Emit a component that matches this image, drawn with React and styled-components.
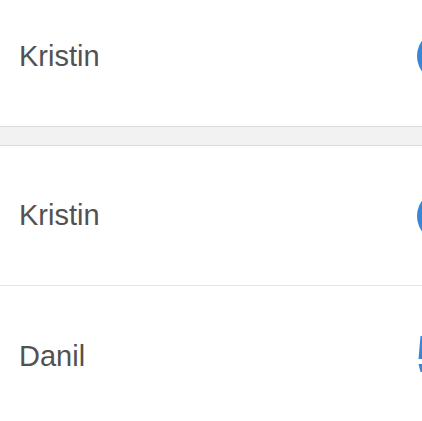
import React from 'react'
import styled, { createGlobalStyle } from 'styled-components'

const GlobalStyle = createGlobalStyle`
    html, body {
        margin: 0;
        padding: 0;
        background: #ffffff;
        overflow: hidden;
        font-family: "Liberation Sans", Arial, sans-serif;
    }
`
const List = styled.div`
    display: flex;
    flex-direction: column;
    margin-top: -14px;
    width: 422px;
    overflow: hidden;
`
const Row = styled.div`
    display: flex;
    align-items: center;
    height: 140px;
    padding-left: 19px;
    box-sizing: border-box;
    border-bottom: ${props => props.last ? 'none' : '1px solid #e4e4e4'};
    overflow: hidden;
`
const Name = styled.span`
    font-size: 29px;
    color: #525252;
    flex: 1;
`
const Badge = styled.div`
    width: 52px;
    height: 52px;
    border-radius: 50%;
    background: #3a86d4;
    margin-right: -47px;
    flex-shrink: 0;
`
const Glyph = styled.svg`
    width: 50px;
    height: 40px;
    margin-right: -46px;
    flex-shrink: 0;
`
const Gap = styled.div`
    height: 18px;
    background: #f2f2f2;
    border-top: 1px solid #dcdcdc;
    border-bottom: 1px solid #dcdcdc;
`

const App = () => {
  return (
    <>
      <GlobalStyle />
      <List>
        <Row last>
          <Name>Kristin</Name>
          <Badge />
        </Row>
        <Gap />
        <Row>
          <Name>Kristin</Name>
          <Badge />
        </Row>
        <Row last>
          <Name>Danil</Name>
          <Glyph viewBox="0 0 50 40">
            <polygon points="2.5,0 4,0 4,23 0.5,23" fill="#3a86d4" />
            <polygon points="0.5,28 4,28 4,36 2.5,36" fill="#3a86d4" />
          </Glyph>
        </Row>
      </List>
    </>
  )
}

export default App
